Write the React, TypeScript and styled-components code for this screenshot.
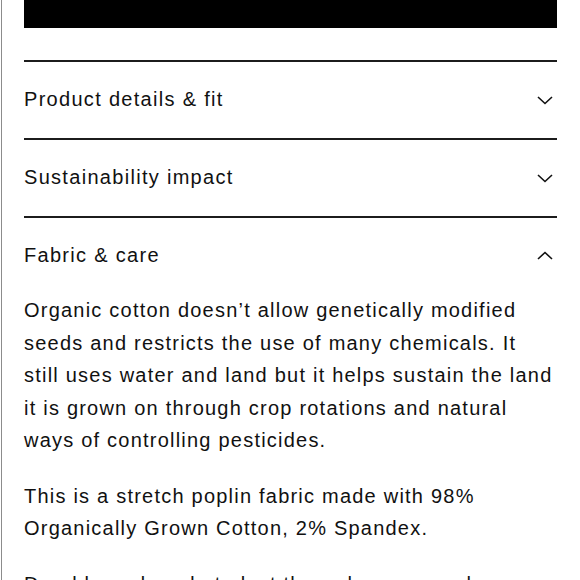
import React, { useState } from "react";
import styled, { createGlobalStyle } from "styled-components";

const Global = createGlobalStyle`
  html, body { margin: 0; padding: 0; background: #fff; }
  body { font-family: "Liberation Sans", Arial, sans-serif; color: #111; -webkit-font-smoothing: antialiased; }
`;

const Page = styled.div`
  margin-left: 1px;
  border-left: 1px solid #8c8c8c;
  padding: 0 23px 0 22px;
  min-height: 580px;
  box-sizing: border-box;
`;

const BlackBar = styled.div`
  height: 28px;
  background: #000;
  margin-bottom: 32px;
`;

const Item = styled.section`
  border-top: 2px solid #1c1c1c;
`;

const Header = styled.button`
  all: unset;
  box-sizing: border-box;
  width: 100%;
  height: 76px;
  display: flex;
  align-items: center;
  justify-content: space-between;
  padding: 0 4px 2px 0;
  cursor: pointer;
  font-family: "Liberation Sans", Arial, sans-serif;
  font-size: 20px;
  letter-spacing: 1.3px;
  color: #111;
`;

const Chevron = styled.svg<{ $open: boolean }>`
  width: 16px;
  height: 16px;
  flex: none;
  margin-top: 2px;
  transform: ${(p) => (p.$open ? "rotate(180deg)" : "none")};
`;

const Body = styled.div`
  font-size: 20px;
  line-height: 32.5px;
  letter-spacing: 1.22px;
  color: #111;
  & p { margin: 0 0 23px; }
`;

const items = [
  { title: "Product details & fit", body: null as null | string[] },
  { title: "Sustainability impact", body: null },
  {
    title: "Fabric & care",
    body: [
      "Organic cotton doesn\u2019t allow genetically modified seeds and restricts the use of many chemicals. It still uses water and land but it helps sustain the land it is grown on through crop rotations and natural ways of controlling pesticides.",
      "This is a stretch poplin fabric made with 98% Organically Grown Cotton, 2% Spandex.",
      "Durable and made to last through many washes.",
    ],
  },
];

export default function App() {
  const [open, setOpen] = useState(2);
  return (
    <>
      <Global />
      <Page>
        <BlackBar />
        {items.map((it, i) => (
          <Item key={it.title}>
            <Header onClick={() => setOpen(open === i ? -1 : i)}>
              <span>{it.title}</span>
              <Chevron $open={open === i} viewBox="0 0 16 16">
                <polyline points="1,5 8,11.5 15,5" fill="none" stroke="#111" strokeWidth="1.6" />
              </Chevron>
            </Header>
            {open === i && it.body && (
              <Body>
                {it.body.map((p) => (
                  <p key={p}>{p}</p>
                ))}
              </Body>
            )}
          </Item>
        ))}
      </Page>
    </>
  );
}
